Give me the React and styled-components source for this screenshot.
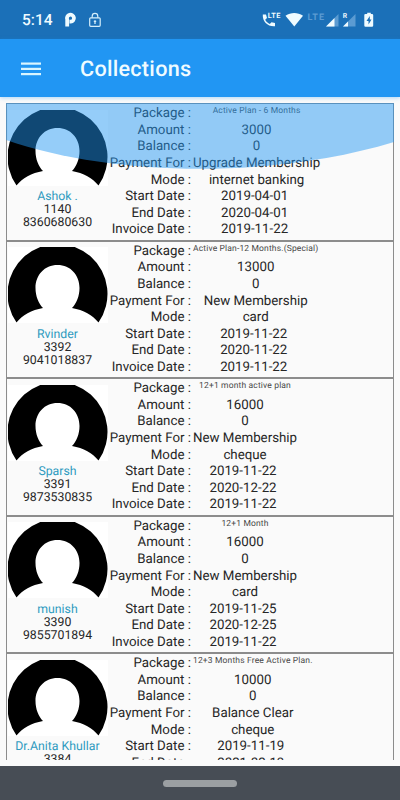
import React from "react";
import styled, { createGlobalStyle } from "styled-components";

const GlobalStyle = createGlobalStyle`
  body {
    margin: 0;
    background: #fafafa;
    font-family: Roboto, sans-serif;
    text-rendering: geometricPrecision;
  }
`;

const Screen = styled.div`
  width: 400px;
  height: 800px;
  display: flex;
  flex-direction: column;
  overflow: hidden;
  background: #fafafa;
`;

const StatusBar = styled.div`
  flex: none;
  height: 39px;
  display: flex;
  align-items: center;
  box-sizing: border-box;
  padding: 0 24px 0 22px;
  background: #1b70b8;
  color: #effbff;
`;

const Clock = styled.span`
  font-size: 15.5px;
  font-weight: 500;
  line-height: 39px;
  padding-top: 1px;
  width: 42px;
`;

const StatusIcons = styled.svg`
  display: block;
  margin-left: ${props => props.$push || "0"};
`;

const AppBar = styled.div`
  flex: none;
  height: 58px;
  display: flex;
  align-items: center;
  box-sizing: border-box;
  padding: 2px 21px 0;
  background: #2196f3;
  box-shadow: 0 1px 4px rgba(33, 150, 243, 0.35);
  z-index: 1;
`;

const Title = styled.h1`
  margin: 0 0 0 39px;
  font-size: 21.6px;
  font-weight: 500;
  letter-spacing: 0.28px;
  color: #effbff;
`;

const List = styled.div`
  position: relative;
  flex: none;
  height: 663px;
  box-sizing: border-box;
  margin: 0 6px;
  padding-top: 6px;
  overflow: hidden;
`;

const Glow = styled.svg`
  position: absolute;
  top: 6px;
  left: 0;
`;

const Card = styled.div`
  display: flex;
  height: 137.5px;
  box-sizing: border-box;
  border: 1px solid #8c8c8c;
  background: #fafafa;
`;

const Member = styled.div`
  flex: none;
  width: 101px;
  padding-top: 5.5px;
  display: flex;
  flex-direction: column;
  align-items: center;
  font-size: 12.3px;
  line-height: 13px;
  color: #262626;
`;

const Portrait = styled.svg`
  flex: none;
`;

const Name = styled.span`
  margin-top: 5.5px;
  line-height: 13px;
  white-space: nowrap;
  color: #2f9abf;
`;

const Labels = styled.div`
  flex: none;
  width: 83px;
  display: flex;
  flex-direction: column;
  align-items: flex-end;
  padding-top: 2.3px;
`;

const Values = styled.div`
  display: flex;
  flex-direction: column;
  align-items: center;
  margin-left: 2px;
  padding-top: 2.3px;
`;

const Line = styled.span`
  height: 16.6px;
  box-sizing: border-box;
  padding-right: ${props => (props.$date ? "4px" : "0")};
  font-size: 13.3px;
  line-height: 16.6px;
  white-space: nowrap;
  color: #262626;
`;

const Plan = styled(Line)`
  font-size: 8.5px;
  line-height: 10.5px;
  letter-spacing: 0.15px;
  color: #484848;
`;

const NavBar = styled.div`
  flex: none;
  height: 34px;
  margin-top: 6px;
  display: flex;
  align-items: center;
  justify-content: center;
  background: #474d55;
`;

const Pill = styled.div`
  width: 74px;
  height: 7px;
  border-radius: 4px;
  background: #9b9fa2;
`;

const labels = [
  "Package :",
  "Amount :",
  "Balance :",
  "Payment For :",
  "Mode :",
  "Start Date :",
  "End Date :",
  "Invoice Date :"
];

const collections = [
  {
    name: "Ashok .",
    id: "1140",
    phone: "8360680630",
    plan: "Active Plan - 6 Months",
    values: ["3000", "0", "Upgrade Membership", "internet banking"],
    dates: ["2019-04-01", "2020-04-01", "2019-11-22"]
  },
  {
    name: "Rvinder",
    id: "3392",
    phone: "9041018837",
    plan: "Active Plan-12 Months.(Special)",
    values: ["13000", "0", "New Membership", "card"],
    dates: ["2019-11-22", "2020-11-22", "2019-11-22"]
  },
  {
    name: "Sparsh",
    id: "3391",
    phone: "9873530835",
    plan: "12+1 month active plan",
    values: ["16000", "0", "New Membership", "cheque"],
    dates: ["2019-11-22", "2020-12-22", "2019-11-22"]
  },
  {
    name: "munish",
    id: "3390",
    phone: "9855701894",
    plan: "12+1 Month",
    values: ["16000", "0", "New Membership", "card"],
    dates: ["2019-11-25", "2020-12-25", "2019-11-22"]
  },
  {
    name: "Dr.Anita Khullar",
    id: "3384",
    plan: "12+3 Months Free Active Plan.",
    values: ["10000", "0", "Balance Clear", "cheque"],
    dates: ["2019-11-19", "2021-02-19"]
  }
];

const Avatar = () => (
  <Portrait width="100" height="76" viewBox="0.5 0 100 76">
    <rect width="101" height="76" fill="#fff" />
    <path d="M9 75.500A50 50 0 1 1 91 75.500Z" fill="#000" />
    <path
      d="M50 18C63 18 72 28 72 41C72 49 69 56.500 64.500 61C76 63 85 68 91.500 76H8.500C15 68 24 63 35.500 61C31 56.500 28 49 28 41C28 28 37 18 50 18Z"
      fill="#fff"
    />
  </Portrait>
);

const CollectionCard = ({ name, id, phone, plan, values, dates }) => (
  <Card>
    <Member>
      <Avatar />
      <Name>{name}</Name>
      <span>{id}</span>
      {phone && <span>{phone}</span>}
    </Member>
    <Labels>
      {labels.slice(0, 1 + values.length + dates.length).map(l => (
        <Line key={l}>{l}</Line>
      ))}
    </Labels>
    <Values>
      <Plan>{plan}</Plan>
      {values.map((v, i) => (
        <Line key={i}>{v}</Line>
      ))}
      {dates.map((d, i) => (
        <Line key={i} $date>
          {d}
        </Line>
      ))}
    </Values>
  </Card>
);

const App = () => {
  return (
    <Screen>
      <GlobalStyle />
      <StatusBar>
        <Clock>5:14</Clock>
        {/* parking + lock */}
        <StatusIcons width="40" height="16" viewBox="0 0 40 16" fill="none">
          <path
            d="M3.200 14.500V7.500A3.500 3.500 0 1 1 6.700 9.700H5.500"
            stroke="#effbff"
            strokeWidth="3.800"
          />
          <rect x="25.700" y="5.800" width="10.500" height="8.500" rx="1" stroke="#d5effb" strokeWidth="1.200" />
          <path d="M28.200 5.800V4.200A2.800 2.800 0 0 1 33.800 4.200V5.800" stroke="#d5effb" strokeWidth="1.200" />
          <path d="M31 8.300V12M29.800 9.300H32.200" stroke="#d5effb" strokeWidth="1.300" />
        </StatusIcons>
        <StatusIcons
          $push="auto"
          width="114"
          height="20"
          viewBox="0 0 114 20"
          fill="#effbff"
        >
          <path d="M.8 4.500H4L5 8L3.200 9.800C4.200 11.800 6 13.300 7.800 14L9.500 12.300L13 13V16.300C6 17 .3 11.500 .8 4.500Z" />
          <text x="5.800" y="8.300" fontSize="7.300" fontWeight="700" textLength="12.500">LTE</text>
          <path d="M23.500 5.800C29 2.200 35.500 2.200 41 5.800L32.300 16.500Z" />
          <text x="45.500" y="10" fontSize="9" fontWeight="700" textLength="16.500" fill="#5b9bd2">LTE</text>
          <path d="M76.500 4V16.500H64Z" fill="#5b9bd2" />
          <path d="M72.500 8V16.500H64Z" />
          <path d="M93.500 4V16.500H81Z" fill="#5b9bd2" />
          <path d="M86 11.500V16.500H81Z" />
          <text x="80.800" y="8.300" fontSize="6.800" fontWeight="700">R</text>
          <path d="M104 4H105.200V2.800H108.800V4H110Q111.200 4 111.200 5V15.500Q111.200 16.800 110 16.800H103.500Q102.300 16.800 102.300 15.500V5Q102.300 4 103.500 4Z" />
          <path d="M107.800 6L104.500 11H106.500V14.500L109.500 9.500H107.800Z" fill="#1b70b8" />
        </StatusIcons>
      </StatusBar>
      <AppBar>
        <svg width="20" height="14" viewBox="0 0 20 14" fill="#d9f5ff">
          <rect y="0.500" width="20" height="2.200" />
          <rect y="5.800" width="20" height="2.200" />
          <rect y="11" width="20" height="2.200" />
        </svg>
        <Title>Collections</Title>
      </AppBar>
      <List>
        {collections.map(c => (
          <CollectionCard key={c.id} {...c} />
        ))}
        {/* overscroll glow */}
        <Glow width="388" height="70" viewBox="0 0 388 70">
          <path d="M0 0H388V39C270 75 110 75 0 37Z" fill="#2196f3" fillOpacity="0.48" />
        </Glow>
      </List>
      <NavBar>
        <Pill />
      </NavBar>
    </Screen>
  );
};

export default App;
